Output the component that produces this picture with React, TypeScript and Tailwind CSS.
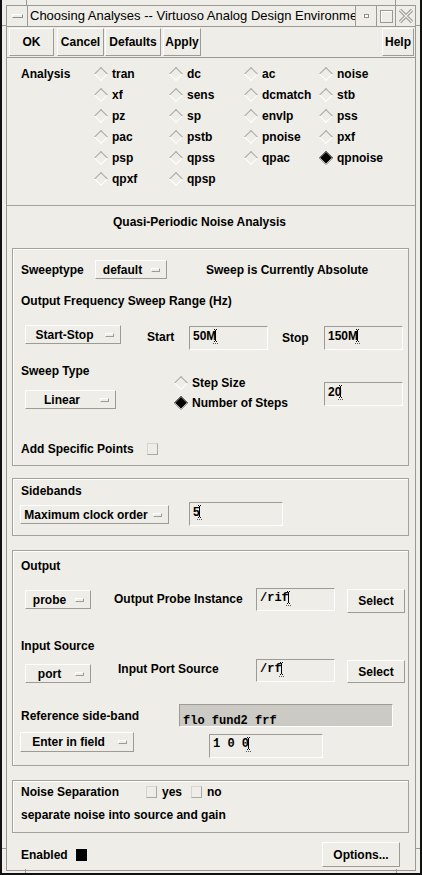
import React from "react";

const raised =
  "border border-t-white border-l-white border-b-[#9c9b96] border-r-[#9c9b96]";
const sunken =
  "border border-t-[#9c9b96] border-l-[#9c9b96] border-b-white border-r-white";

function Diamond({ on }: { on?: boolean }) {
  return (
    <span className="inline-flex w-[14px] h-[14px] items-center justify-center shrink-0">
      {on ? (
        <span className="block w-[10px] h-[10px] rotate-45 bg-black border border-t-[#6a6a6a] border-l-[#6a6a6a] border-b-[#d8d8d8] border-r-[#d8d8d8]" />
      ) : (
        <span className="block w-[10px] h-[10px] rotate-45 border border-t-[#a9a8a3] border-l-[#a9a8a3] border-b-white border-r-white" />
      )}
    </span>
  );
}

function Drop({ label, className }: { label: string; className: string }) {
  return (
    <div className={`${raised} flex items-center shrink-0 ${className}`}>
      <span className="flex-1 text-center text-[12px] font-bold leading-[14px] whitespace-nowrap">
        {label}
      </span>
      <span className="block w-[9px] h-[4px] ml-[2px] mr-[6px] border border-t-white border-l-white border-b-[#9c9b96] border-r-[#9c9b96]" />
    </div>
  );
}

function Caret() {
  return (
    <svg width="5" height="15" viewBox="0 0 5 15" className="inline-block align-top -ml-[3px]">
      <rect x="2" y="1" width="1" height="11" fill="#000" />
      <rect x="1" y="0" width="1" height="1" fill="#000" />
      <rect x="3" y="0" width="1" height="1" fill="#000" />
      <rect x="1" y="12" width="1" height="1" fill="#000" />
      <rect x="3" y="12" width="1" height="1" fill="#000" />
      <rect x="0" y="14" width="1" height="1" fill="#555" />
      <rect x="2" y="14" width="1" height="1" fill="#555" />
      <rect x="4" y="14" width="1" height="1" fill="#555" />
    </svg>
  );
}

function Field({
  value,
  className,
  mono,
}: {
  value: string;
  className: string;
  mono?: boolean;
}) {
  return (
    <div className={`${sunken} shrink-0 pl-[3px] pt-[2px] whitespace-nowrap ${className}`}>
      <span
        className={
          mono
            ? "font-['Liberation_Mono',monospace] font-bold text-[12px] leading-[15px] align-top"
            : "font-bold text-[12px] leading-[15px] align-top"
        }
      >
        {value}
      </span>
      <Caret />
    </div>
  );
}

function Btn({ label, className }: { label: string; className: string }) {
  return (
    <div
      className={`${raised} shrink-0 flex items-center justify-center text-[12px] font-bold leading-[14px] ${className}`}
    >
      {label}
    </div>
  );
}

function Check({ on }: { on?: boolean }) {
  return on ? (
    <span className="block shrink-0 w-[11px] h-[12px] bg-black border border-black" />
  ) : (
    <span className="block shrink-0 w-[11px] h-[12px] border border-t-[#d6d5cf] border-l-[#d6d5cf] border-b-[#a9a8a3] border-r-[#a9a8a3]" />
  );
}

function Label({ children, className = "" }: { children: React.ReactNode; className?: string }) {
  return (
    <span className={`block shrink-0 text-[12px] font-bold leading-[16px] whitespace-nowrap ${className}`}>
      {children}
    </span>
  );
}

function Frame({ children, className }: { children: React.ReactNode; className: string }) {
  return (
    <div
      className={`ml-[5px] w-[397px] border border-[#a3a29d] shadow-[inset_1px_1px_0_#ffffff] ${className}`}
    >
      {children}
    </div>
  );
}

const grid: (string | null)[][] = [
  ["tran", "dc", "ac", "noise"],
  ["xf", "sens", "dcmatch", "stb"],
  ["pz", "sp", "envlp", "pss"],
  ["pac", "pstb", "pnoise", "pxf"],
  ["psp", "qpss", "qpac", "qpnoise"],
  ["qpxf", "qpsp", null, null],
];

export default function App() {
  return (
    <div className="w-[422px] h-[875px] bg-[#eeede7] font-['Liberation_Sans',Arial,sans-serif] text-black relative overflow-hidden">
      {/* window frame */}
      <div className="h-full border-x-2 border-b-2 border-[#111111] pt-[5px] px-[4px] pb-[2px]">
        <div className="h-full flex flex-col border border-[#9a9994]">
          {/* title bar */}
          <div className="h-[21px] shrink-0 flex border-b border-[#9a9994]">
            <div className="w-[21px] border-r border-[#9a9994] flex items-center justify-center">
              <span className="block w-[11px] h-[4px] border border-t-white border-l-white border-b-[#8f8e89] border-r-[#8f8e89]" />
            </div>
            <div className="w-[328px] border-r border-[#9a9994] overflow-hidden whitespace-nowrap text-[13px] leading-[20px] pl-[2px]">
              Choosing Analyses -- Virtuoso Analog Design Environment
            </div>
            <div className="w-[21px] border-r border-[#9a9994] flex items-center justify-center">
              <span className="block w-[5px] h-[4px] border border-[#8f8e89] bg-white" />
            </div>
            <div className="w-[19px] border-r border-[#9a9994] flex items-center justify-center">
              <span className="block w-[13px] h-[13px] border border-[#9a9994] shadow-[inset_1px_1px_0_#ffffff]" />
            </div>
            <div className="w-[19px] flex items-center justify-center">
              <svg width="16" height="16" viewBox="0 0 16 16">
                <path d="M2 2 L14 14 M14 2 L2 14" stroke="#9a9994" strokeWidth="3.2" fill="none" />
                <path d="M2 2 L14 14 M14 2 L2 14" stroke="#eeede7" strokeWidth="1.2" fill="none" />
              </svg>
            </div>
          </div>

          {/* toolbar */}
          <div className="h-[31px] shrink-0 flex pt-[1px] pl-[2px] border-b border-[#9a9994]">
            <Btn label="OK" className="w-[45px] h-[28px]" />
            <Btn label="Cancel" className="ml-[3px] w-[47px] h-[28px]" />
            <Btn label="Defaults" className="ml-[1px] w-[56px] h-[28px]" />
            <Btn label="Apply" className="ml-[2px] w-[38px] h-[28px]" />
            <Btn label="Help" className="ml-auto mr-[1px] w-[32px] h-[28px]" />
          </div>

          {/* form */}
          <div className="flex-1 flex flex-col">
            {/* analysis selection */}
            <div className="h-[148px] shrink-0 border-b border-[#a3a29d] pt-[5px] pl-[14px]">
              <div className="grid grid-cols-[73px_75px_75px_75px_75px] auto-rows-[21px]">
                {grid.map((row, ri) => (
                  <React.Fragment key={ri}>
                    <div className="flex items-center">
                      {ri === 0 && <Label>Analysis</Label>}
                    </div>
                    {row.map((name, ci) => (
                      <div key={ci} className="flex items-center gap-[4px]">
                        {name && (
                          <>
                            <Diamond on={name === "qpnoise"} />
                            <Label>{name}</Label>
                          </>
                        )}
                      </div>
                    ))}
                  </React.Fragment>
                ))}
              </div>
            </div>

            {/* qpnoise form */}
            <div className="flex-1 flex flex-col pt-[8px]">
              <Label className="pl-[106px]">Quasi-Periodic Noise Analysis</Label>

              {/* Frame 1 */}
              <Frame className="mt-[18px] pt-[11px] pb-[8px]">
                <div className="flex items-center h-[19px] pl-[8px]">
                  <Label className="w-[74px]">Sweeptype</Label>
                  <Drop label="default" className="w-[72px] h-[19px]" />
                  <Label className="ml-[39px]">Sweep is Currently Absolute</Label>
                </div>
                <div className="mt-[14px] h-[16px] pl-[8px]">
                  <Label>Output Frequency Sweep Range (Hz)</Label>
                </div>
                <div className="mt-[16px] h-[25px] flex items-start pl-[12px]">
                  <Drop label="Start-Stop" className="w-[96px] h-[19px]" />
                  <Label className="ml-[26px] w-[42px] mt-[4px]">Start</Label>
                  <Field value="50M" className="w-[79px] h-[24px] mt-[1px]" />
                  <Label className="ml-[14px] w-[42px] mt-[5px]">Stop</Label>
                  <Field value="150M" className="w-[79px] h-[24px] mt-[1px]" />
                </div>
                <div className="mt-[13px] h-[50px] flex pl-[8px]">
                  <div className="w-[153px] shrink-0 flex flex-col">
                    <Label>Sweep Type</Label>
                    <Drop label="Linear" className="ml-[4px] mt-[11px] w-[91px] h-[19px]" />
                  </div>
                  <div className="w-[150px] shrink-0 pt-[10px]">
                    <div className="h-[20px] flex items-center gap-[4px]">
                      <Diamond />
                      <Label>Step Size</Label>
                    </div>
                    <div className="h-[20px] flex items-center gap-[4px]">
                      <Diamond on />
                      <Label>Number of Steps</Label>
                    </div>
                  </div>
                  <Field value="20" className="w-[79px] h-[24px] mt-[19px]" />
                </div>
                <div className="mt-[28px] h-[16px] flex items-center pl-[8px]">
                  <Label className="w-[126px]">Add Specific Points</Label>
                  <Check />
                </div>
              </Frame>

              {/* Frame 2 */}
              <Frame className="mt-[12px] pt-[4px] pb-[9px]">
                <div className="h-[16px] pl-[8px]">
                  <Label>Sidebands</Label>
                </div>
                <div className="mt-[3px] h-[24px] flex items-start pl-[7px]">
                  <Drop label="Maximum clock order" className="w-[149px] h-[19px] mt-[3px]" />
                  <Field value="5" className="ml-[20px] w-[94px] h-[24px]" />
                </div>
              </Frame>

              {/* Frame 3 */}
              <Frame className="mt-[14px] pt-[7px] pb-[7px]">
                <div className="h-[16px] pl-[8px]">
                  <Label>Output</Label>
                </div>
                <div className="mt-[14px] h-[25px] flex items-start pl-[12px]">
                  <Drop label="probe" className="w-[66px] h-[19px] mt-[2px]" />
                  <Label className="ml-[23px] w-[142px] mt-[3px]">Output Probe Instance</Label>
                  <Field value="/rif" mono className="w-[79px] h-[23px]" />
                  <Btn label="Select" className="ml-[12px] w-[58px] h-[24px] mt-[1px]" />
                </div>
                <div className="mt-[25px] h-[16px] pl-[8px]">
                  <Label>Input Source</Label>
                </div>
                <div className="mt-[5px] h-[25px] flex items-start pl-[12px]">
                  <Drop label="port" className="w-[66px] h-[19px] mt-[5px]" />
                  <Label className="ml-[27px] w-[138px] mt-[2px]">Input Port Source</Label>
                  <Field value="/rf" mono className="w-[79px] h-[23px]" />
                  <Btn label="Select" className="ml-[12px] w-[58px] h-[23px] mt-[1px]" />
                </div>
                <div className="mt-[20px] h-[23px] flex items-start pl-[8px]">
                  <Label className="w-[158px] mt-[4px]">Reference side-band</Label>
                  <div className={`${sunken} w-[214px] h-[23px] bg-[#cbcac4] pl-[3px] pt-[2px]`}>
                    <span className="font-['Liberation_Mono',monospace] font-bold text-[12px] leading-[15px] whitespace-pre">
                      flo fund2 frf
                    </span>
                  </div>
                </div>
                <div className="mt-[5px] h-[26px] flex items-start pl-[7px]">
                  <Drop label="Enter in field" className="w-[114px] h-[20px]" />
                  <Field value="1 0 0" mono className="ml-[75px] mt-[2px] w-[114px] h-[24px]" />
                </div>
              </Frame>

              {/* Frame 4 */}
              <Frame className="mt-[14px] pt-[3px] pb-[9px]">
                <div className="h-[16px] flex items-center pl-[8px]">
                  <Label className="w-[125px]">Noise Separation</Label>
                  <Check />
                  <Label className="ml-[5px] w-[29px]">yes</Label>
                  <Check />
                  <Label className="ml-[5px]">no</Label>
                </div>
                <div className="mt-[7px] h-[16px] pl-[8px]">
                  <Label>separate noise into source and gain</Label>
                </div>
              </Frame>

              {/* bottom row */}
              <div className="mt-[9px] h-[25px] flex items-center pl-[14px]">
                <Label className="w-[55px]">Enabled</Label>
                <Check on />
                <Btn label="Options..." className="ml-auto mr-[15px] w-[78px] h-[25px]" />
              </div>
            </div>
          </div>
        </div>
      </div>

      {/* resize handle ticks on the window frame */}
      <span className="absolute left-[26px] top-0 w-px h-[5px] bg-[#9a9994]" />
      <span className="absolute left-[395px] top-0 w-px h-[5px] bg-[#9a9994]" />
      <span className="absolute left-[25px] bottom-[2px] w-px h-[4px] bg-[#9a9994]" />
      <span className="absolute left-[396px] bottom-[2px] w-px h-[4px] bg-[#9a9994]" />
      <span className="absolute left-[2px] top-[25px] w-[4px] h-px bg-[#9a9994]" />
      <span className="absolute right-[2px] top-[25px] w-[5px] h-px bg-[#9a9994]" />
      <span className="absolute left-[2px] top-[848px] w-[4px] h-px bg-[#9a9994]" />
      <span className="absolute right-[2px] top-[848px] w-[5px] h-px bg-[#9a9994]" />
    </div>
  );
}
